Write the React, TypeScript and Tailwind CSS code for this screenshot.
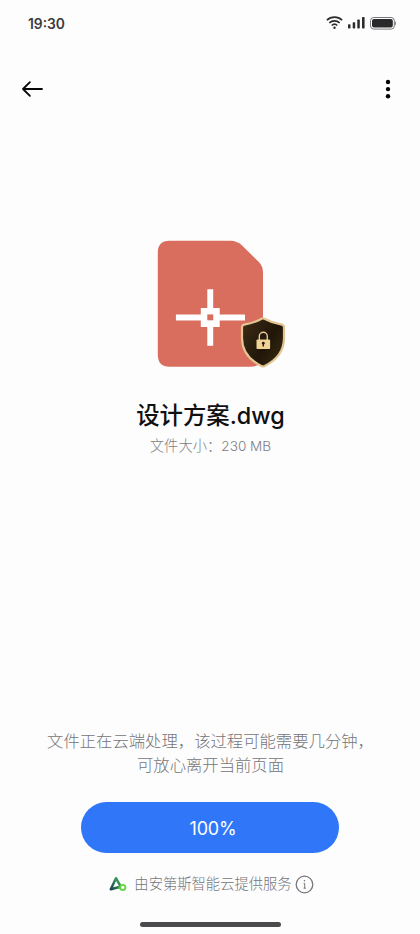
// Cloud processing screen: file preview, size and the progress button.

const FONT = "font-['Inter','Noto_Sans_CJK_SC',sans-serif]";

function WifiIcon() {
  return (
    <svg width="17" height="14" viewBox="0 0 17 14" fill="none" stroke="#2c2c2e" strokeWidth="1.6">
      <path d="M0.9 4.2a11 11 0 0 1 15.2 0" />
      <path d="M3.3 6.9a7.6 7.6 0 0 1 10.4 0" />
      <path d="M5.7 9.5a4.1 4.1 0 0 1 5.6 0" />
      <circle cx="8.5" cy="11.7" r="1.2" fill="#2c2c2e" stroke="none" />
    </svg>
  );
}

function SignalIcon() {
  return (
    <svg width="17" height="12" viewBox="0 0 17 12" fill="#2c2c2e">
      <rect x="0" y="7.2" width="2.5" height="4.2" rx="0.7" />
      <rect x="4.7" y="5.3" width="2.5" height="6.1" rx="0.7" />
      <rect x="9.3" y="2.6" width="2.5" height="8.8" rx="0.7" />
      <rect x="14" y="0" width="2.6" height="11.4" rx="0.7" />
    </svg>
  );
}

function BatteryIcon() {
  return (
    <svg width="27" height="13" viewBox="0 0 27 13">
      <rect x="0.5" y="0.5" width="23.8" height="11.6" rx="3.2" fill="none" stroke="#77777a" />
      <rect x="2" y="2" width="20.8" height="8.6" rx="2" fill="#29292b" />
      <path d="M25 4.2c1.3.5 1.3 3.7 0 4.2z" fill="#77777a" />
    </svg>
  );
}

function BackIcon() {
  return (
    <svg width="22" height="18" viewBox="0 0 22 18" fill="none" stroke="#050505" strokeWidth="1.8" strokeLinecap="round" strokeLinejoin="round">
      <path d="M8.9 2.2 2 9l6.9 6.8M2 9h19" />
    </svg>
  );
}

function MoreIcon() {
  return (
    <svg width="6" height="20" viewBox="0 0 6 20" fill="#050505">
      <circle cx="3" cy="3" r="2.2" />
      <circle cx="3" cy="10.1" r="2.2" />
      <circle cx="3" cy="17.2" r="2.2" />
    </svg>
  );
}

function DwgIcon() {
  return (
    <svg width="106" height="127" viewBox="0 0 106 127">
      <path
        d="M12.4 0.8H73.5Q80 0.8 84.8 5.3L101.4 21.5Q106 26 106 32.5V114.5Q106 126.7 93.7 126.7H12.4Q0.8 126.7 0.8 114.5V12.8Q0.8 0.8 12.4 0.8Z"
        fill="#d96d5e"
      />
      <path d="M50.3 49.2h5.9v18.9h6.5v6.3H88v6.1H62.7v6.4h-6.5v18.8h-5.9V86.9h-6.5v-6.4H18.9v-6.1h24.9v-6.3h6.5z" fill="#fff" />
      <rect x="50.3" y="74.4" width="5.9" height="5.9" fill="#d96d5e" />
    </svg>
  );
}

function ShieldIcon() {
  return (
    <svg width="46" height="51" viewBox="0 0 46 51">
      <defs>
        <linearGradient id="shield" x1="0" y1="0.2" x2="1" y2="0.9">
          <stop offset="0" stopColor="#3a2a14" />
          <stop offset="0.55" stopColor="#201609" />
          <stop offset="1" stopColor="#3b2b12" />
        </linearGradient>
      </defs>
      <path
        d="M21.6 1.8Q23 1.2 24.4 1.8C29.5 4.6 35.5 6.6 41.8 7.7Q44 8.1 44 10.6V21C44 34 36 43.3 24.7 49Q23 49.8 21.3 49C10 43.3 2 34 2 21V10.6Q2 8.1 4.2 7.7C10.5 6.6 16.5 4.6 21.6 1.8Z"
        fill="url(#shield)"
        stroke="#e2c591"
        strokeWidth="2.2"
      />
      <path d="M19.3 23.5v-4.2a4 4 0 0 1 8 0v4.2" fill="none" stroke="#e6cb98" strokeWidth="1.4" />
      <rect x="16.5" y="22.4" width="13.6" height="9.7" rx="1.2" fill="#efd295" />
      <circle cx="23.3" cy="26.2" r="1.4" fill="#291c0c" />
      <path d="M22.6 26.3H24v3.3h-1.4z" fill="#291c0c" />
    </svg>
  );
}

function AndesLogo() {
  return (
    <svg width="18" height="16" viewBox="0 0 18 16" fill="none">
      <defs>
        <linearGradient id="peak" x1="0" y1="1" x2="1" y2="0">
          <stop offset="0" stopColor="#1d4550" />
          <stop offset="1" stopColor="#3fae62" />
        </linearGradient>
      </defs>
      <path d="M1.8 13.2 7 2.2 11.2 9.6M1.8 13.2 9.4 11.2" stroke="url(#peak)" strokeWidth="2.5" strokeLinejoin="round" strokeLinecap="round" />
      <circle cx="13.8" cy="11.4" r="2.6" stroke="#63d83c" strokeWidth="1.8" />
      <path d="M9.2 11.8 11.6 12.4" stroke="#4cc449" strokeWidth="1.8" />
    </svg>
  );
}

function InfoIcon() {
  return (
    <svg width="19" height="19" viewBox="0 0 19 19" fill="none" stroke="#77777a" strokeWidth="1.3">
      <circle cx="9.5" cy="9.5" r="8.3" />
      <path d="M8.6 8.3h1.1v4.9M8.5 13.2h2.4" strokeWidth="1" />
      <circle cx="9.5" cy="5.8" r="0.8" fill="#77777a" stroke="none" />
    </svg>
  );
}

export default function App() {
  return (
    <div className={`${FONT} flex h-[934px] w-[420px] flex-col overflow-hidden bg-[#fdfdfe]`}>
      <header className="flex h-[46px] items-center justify-between pr-[23px] pl-[28px]">
        <span className="pt-[2px] text-[13.8px] font-semibold text-[#3a3a3c]">19:30</span>
        <div className="flex items-center gap-[5px]">
          <WifiIcon />
          <SignalIcon />
          <BatteryIcon />
        </div>
      </header>

      <nav className="flex h-[86px] items-center justify-between pr-[29px] pl-[21px]">
        <button aria-label="返回">
          <BackIcon />
        </button>
        <button aria-label="更多">
          <MoreIcon />
        </button>
      </nav>

      <main className="flex flex-col items-center pt-[108px]">
        <div className="relative">
          <DwgIcon />
          <div className="absolute -right-[23px] -bottom-[1px]">
            <ShieldIcon />
          </div>
        </div>
        <h1 className="mt-[32px] pl-[1px] text-[23.4px] leading-[34px] font-medium whitespace-nowrap text-[#101010]">
          设计方案<span className="font-[450]">.dwg</span>
        </h1>
        <p className="mt-[3px] pl-[1px] text-[14.3px] leading-[20px] font-light whitespace-nowrap text-[#808082]">
          文件大小：<span className="text-[13.6px]">230 MB</span>
        </p>
      </main>

      <footer className="mt-auto flex flex-col items-center">
        <p className="pl-[1px] text-center text-[16.35px] leading-[23.5px] font-light whitespace-nowrap text-[#757577]">
          文件正在云端处理，该过程可能需要几分钟，
          <br />
          可放心离开当前页面
        </p>
        <button className="mt-[25px] h-[51px] w-[258px] rounded-full bg-[#2f77f8] pt-[2px] pl-[6px] text-[18px] tracking-[-0.2px] text-white">100%</button>
        <div className="mt-[20px] flex h-[22px] items-center pl-[3px]">
          <AndesLogo />
          <span className="ml-[7px] text-[14.3px] font-light whitespace-nowrap text-[#757578]">由安第斯智能云提供服务</span>
          <span className="ml-[3px]">
            <InfoIcon />
          </span>
        </div>
        <div className="mt-[27px] mb-[7px] h-[5px] w-[141px] rounded-full bg-[#4b4b4d]" />
      </footer>
    </div>
  );
}
